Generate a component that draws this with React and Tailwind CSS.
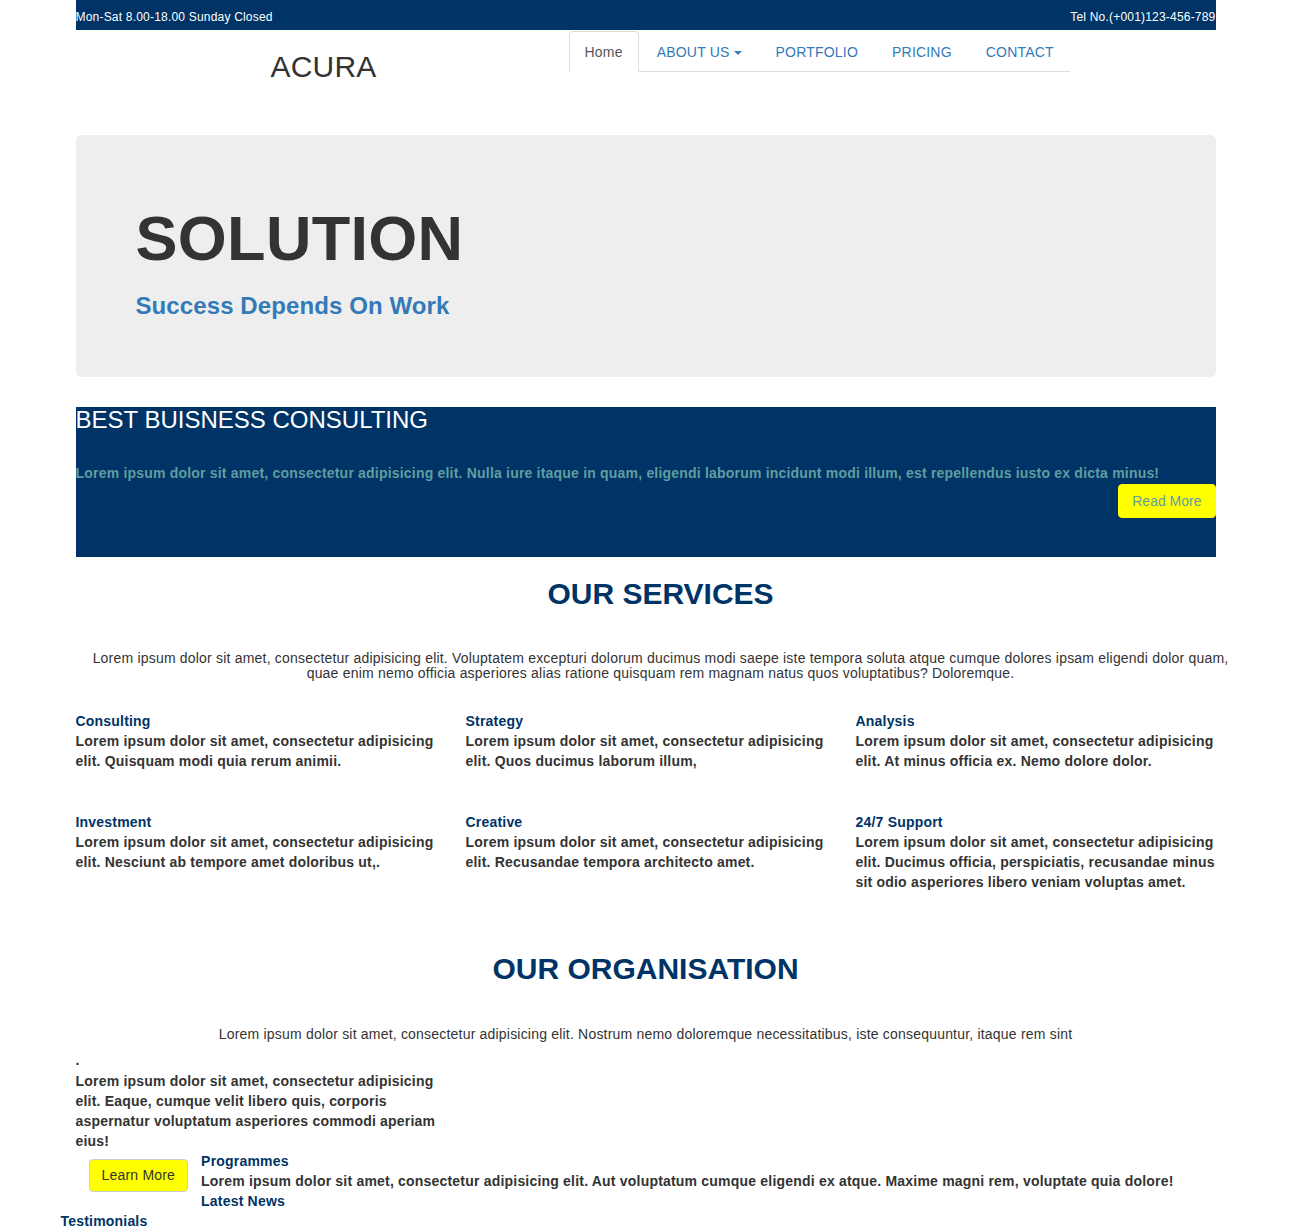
import React from 'react';

const services = [
    { title: 'Consulting', text: 'Lorem ipsum dolor sit amet, consectetur adipisicing elit. Quisquam modi quia rerum animii.' },
    { title: 'Strategy', text: 'Lorem ipsum dolor sit amet, consectetur adipisicing elit. Quos ducimus laborum illum,' },
    { title: 'Analysis', text: 'Lorem ipsum dolor sit amet, consectetur adipisicing elit. At minus officia ex. Nemo dolore dolor.' },
    { title: 'Investment', text: 'Lorem ipsum dolor sit amet, consectetur adipisicing elit. Nesciunt ab tempore amet doloribus ut,.' },
    { title: 'Creative', text: 'Lorem ipsum dolor sit amet, consectetur adipisicing elit. Recusandae tempora architecto amet.' },
    { title: '24/7 Support', text: 'Lorem ipsum dolor sit amet, consectetur adipisicing elit. Ducimus officia, perspiciatis, recusandae minus sit odio asperiores libero veniam voluptas amet.' },
];

const navLinks = ['PORTFOLIO', 'PRICING', 'CONTACT'];

const App = () => {
    return (
        <div className="min-h-screen bg-white font-['Liberation_Sans',Arial,sans-serif] text-[14px] leading-5 tracking-[0.2px] text-[#333]">
            <div className="mx-auto w-[1140px]">
                {/* top bar */}
                <div className="flex h-[30px] items-center justify-between bg-[#003366] pt-[3px] text-[12px] text-white">
                    <span>Mon-Sat 8.00-18.00 Sunday Closed</span>
                    <span>Tel No.(+001)123-456-789</span>
                </div>

                {/* header */}
                <div className="flex h-[105px] items-start">
                    <div className="w-[493px] pl-[3px] pt-[20px] text-center">
                        <h1 className="text-[30px] leading-[33px] tracking-[0.2px]">ACURA</h1>
                    </div>
                    <ul className="mt-px flex h-[41px] w-[501px] whitespace-nowrap border-b border-[#ddd]">
                        <li className="-mb-px shrink-0">
                            <a className="mr-[2px] block rounded-t border border-[#ddd] border-b-white bg-white px-[15px] py-[10px] text-[#555]">
                                Home
                            </a>
                        </li>
                        <li className="-mb-px shrink-0">
                            <a className="mr-[2px] flex items-center border border-transparent px-[15px] py-[10px] text-[#337ab7]">
                                ABOUT US
                                <span className="ml-[4px] mt-px inline-block h-0 w-0 border-x-4 border-t-4 border-x-transparent border-t-[#337ab7]" />
                            </a>
                        </li>
                        {navLinks.map((link) => (
                            <li key={link} className="-mb-px shrink-0">
                                <a className="mr-[2px] block border border-transparent px-[15px] py-[10px] text-[#337ab7]">
                                    {link}
                                </a>
                            </li>
                        ))}
                    </ul>
                </div>

                {/* jumbotron */}
                <div className="h-[242px] rounded-md bg-[#eeeeee] pl-[60px] pt-[69px]">
                    <h1 className="text-[63px] font-bold leading-[69px] tracking-[0.3px] text-[#333]">SOLUTION</h1>
                    <h3 className="mt-[20px] text-[24px] font-bold leading-[26px] tracking-[0.1px] text-[#337ab7]">Success Depends On Work</h3>
                </div>

                {/* consulting banner */}
                <div className="mt-[30px] bg-[#003366] pb-[39px]">
                    <h3 className="text-[24px] leading-[26px] tracking-normal text-white">BEST BUISNESS CONSULTING</h3>
                    <p className="mt-[30px] font-bold text-[#5f9ea0]">
                        Lorem ipsum dolor sit amet, consectetur adipisicing elit. Nulla iure itaque in quam, eligendi laborum incidunt modi illum, est repellendus iusto ex dicta minus!
                    </p>
                    <div className="mt-px flex justify-end">
                        <button className="rounded border border-[#ffff00] bg-[#ffff00] px-[13px] py-[6px] tracking-normal text-[#5f9ea0]">
                            Read More
                        </button>
                    </div>
                </div>

                {/* services */}
                <div className="ml-[15px] w-[1140px] text-center">
                    <h2 className="mt-[20px] text-[30px] font-bold leading-[33px] tracking-normal text-[#003366]">OUR SERVICES</h2>
                    <p className="mt-[41px] leading-[15px]">
                        Lorem ipsum dolor sit amet, consectetur adipisicing elit. Voluptatem excepturi dolorum ducimus modi saepe iste tempora soluta atque cumque dolores ipsam eligendi dolor quam, quae enim nemo officia asperiores alias ratione quisquam rem magnam natus quos voluptatibus? Doloremque.
                    </p>
                </div>
                <div className="-mx-[15px] mt-[30px] grid grid-cols-3 gap-y-[41px]">
                    {services.map((item) => (
                        <div key={item.title} className="px-[15px]">
                            <h4 className="font-bold text-[#003366]">{item.title}</h4>
                            <p className="font-bold">{item.text}</p>
                        </div>
                    ))}
                </div>

                {/* organisation */}
                <h2 className="mt-[60px] text-center text-[30px] font-bold leading-[33px] tracking-normal text-[#003366]">OUR ORGANISATION</h2>
                <p className="mt-[39px] text-center">
                    Lorem ipsum dolor sit amet, consectetur adipisicing elit. Nostrum nemo doloremque necessitatibus, iste consequuntur, itaque rem sint
                </p>
                <p className="mt-[6px] font-bold">.</p>
                <p className="mt-px w-[360px] font-bold">
                    Lorem ipsum dolor sit amet, consectetur adipisicing elit. Eaque, cumque velit libero quis, corporis aspernatur voluptatum asperiores commodi aperiam eius!
                </p>
                <div className="flex items-start gap-[13px] pl-[13px]">
                    <button className="mt-[8px] rounded border border-[#ccc] bg-[#ffff00] px-3 py-[6px] leading-[19px] text-[#333]">
                        Learn More
                    </button>
                    <div className="font-bold">
                        <h4 className="text-[#003366]">Programmes</h4>
                        <p>Lorem ipsum dolor sit amet, consectetur adipisicing elit. Aut voluptatum cumque eligendi ex atque. Maxime magni rem, voluptate quia dolore!</p>
                        <h4 className="text-[#003366]">Latest News</h4>
                    </div>
                </div>
                <h4 className="-ml-[15px] font-bold text-[#003366]">Testimonials</h4>
            </div>
        </div>
    );
};

export default App;
